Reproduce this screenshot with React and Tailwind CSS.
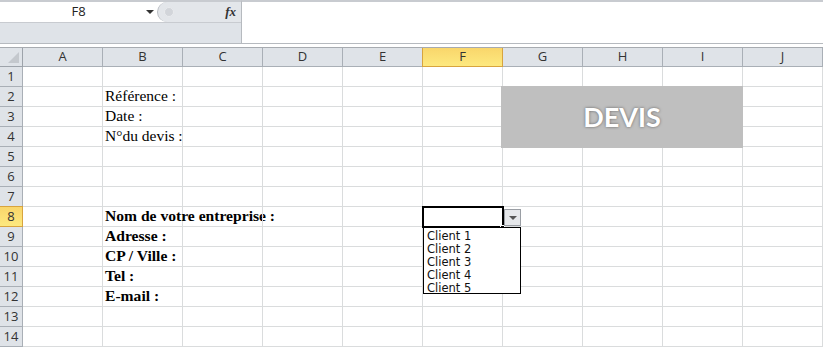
import { useState } from "react";

const cols = ["A", "B", "C", "D", "E", "F", "G", "H", "I", "J"];
const rows = [1, 2, 3, 4, 5, 6, 7, 8, 9, 10, 11, 12, 13, 14];

// contenu de la colonne B (texte qui déborde sur C)
const labels = {
  2: { text: "Référence :", bold: false },
  3: { text: "Date :", bold: false },
  4: { text: "N°du devis :", bold: false },
  8: { text: "Nom de votre entreprise :", bold: true },
  9: { text: "Adresse :", bold: true },
  10: { text: "CP / Ville :", bold: true },
  11: { text: "Tel :", bold: true },
  12: { text: "E-mail :", bold: true },
};

const clients = ["Client 1", "Client 2", "Client 3", "Client 4", "Client 5"];

export default function App() {
  const [active] = useState({ col: "F", row: 8 });

  return (
    <div className="w-[823px] h-[348px] bg-white overflow-hidden" style={{ fontFamily: "'Open Sans', 'Liberation Sans', sans-serif" }}>
      {/* Barre de formule */}
      <div className="h-[48px] flex flex-col bg-[#f3f4f6]">
        <div className="h-[44px] flex border-b border-[#b6babf]">
          <div className="w-[241px] flex flex-col border-t-2 border-[#c8cbd0]">
            <div className="h-[21px] flex bg-white border-b border-[#c8cbd0]">
              <div className="w-[157px] relative flex items-center justify-center text-[13px] text-[#222]">
                F8
                <span className="absolute right-[3px] top-[8px] w-0 h-0 border-l-[4px] border-r-[4px] border-t-[4px] border-l-transparent border-r-transparent border-t-[#333]" />
              </div>
              <div className="flex-1 relative bg-[#e3e6ea] rounded-l-full border-l border-[#b9bdc3] flex items-center">
                <span className="ml-[6px] w-[10px] h-[10px] rounded-full bg-[#d2d5da] border border-[#e9ebee]" />
                <span className="ml-auto mr-[5px] text-[13px] italic font-bold text-[#333]" style={{ fontFamily: "'Liberation Serif', serif" }}>fx</span>
              </div>
            </div>
            <div className="flex-1 bg-[#dfe3e8]" />
          </div>
          <div className="flex-1 bg-white border-l border-t-2 border-[#b6babf] border-t-[#c8cbd0]" />
        </div>
        <div className="flex-1 border-b border-[#a7abb0] bg-white" />
      </div>

      {/* Feuille */}
      <div className="relative">
        <div className="grid grid-cols-[23px_repeat(10,80px)] grid-rows-[19px_repeat(14,20px)]">
          <div className="bg-[#dfe3e8] border-r border-b border-[#9da3aa] relative">
            <span className="absolute right-[3px] bottom-[3px] w-0 h-0" style={{ borderBottom: "11px solid #c4c8cd", borderLeft: "11px solid transparent" }} />
          </div>
          {cols.map((c) =>
            c === active.col ? (
              <div key={c} className="bg-gradient-to-b from-[#f9d66b] to-[#fde97f] border-r border-b border-[#d8a43e] border-l border-l-[#d8a43e] -ml-px flex items-center justify-center text-[13px] text-[#333]">
                {c}
              </div>
            ) : (
              <div key={c} className="bg-[#dfe3e8] border-r border-b border-[#a9afb6] flex items-center justify-center text-[13px] text-[#333]">
                {c}
              </div>
            )
          )}

          {rows.map((r) => (
            <RowCells key={r} r={r} active={active} />
          ))}
        </div>

        {/* Forme DEVIS */}
        <div className="absolute left-[501px] top-[38px] w-[242px] h-[62px] bg-[#bfbfbf] flex items-center justify-center">
          <span className="text-white font-bold text-[27px]" style={{ fontFamily: "Lato, 'Open Sans', sans-serif", textShadow: "0 0 3px rgba(0,0,0,0.5)" }}>
            DEVIS
          </span>
        </div>

        {/* Cellule active + liste déroulante */}
        <div className="absolute left-[422px] top-[158px] w-[82px] h-[22px] border-2 border-black" />
        <div className="absolute left-[500px] top-[177px] w-[5px] h-[5px] bg-black border border-white" />
        <div className="absolute left-[504px] top-[161px] w-[17px] h-[17px] bg-[#e6e8eb] border border-[#9a9ea4] flex items-center justify-center">
          <span className="w-0 h-0 border-l-[4px] border-r-[4px] border-t-[4px] border-l-transparent border-r-transparent border-t-[#555]" />
        </div>
        <div className="absolute left-[423px] top-[179px] w-[98px] h-[67px] bg-white border border-black pt-[2px] pl-[3px]">
          {clients.map((c) => (
            <div key={c} className="h-[13px] leading-[13px] text-[11.5px] text-[#111]" style={{ fontFamily: "'DejaVu Sans', sans-serif" }}>
              {c}
            </div>
          ))}
        </div>
      </div>
    </div>
  );
}

function RowCells({ r, active }) {
  const isActive = r === active.row;
  const label = labels[r];
  return (
    <>
      {isActive ? (
        <div className="bg-gradient-to-b from-[#f9d66b] to-[#fde97f] border-r border-b border-[#d8a43e] border-t border-t-[#d8a43e] -mt-px flex items-center justify-center text-[13px] text-[#333]">
          {r}
        </div>
      ) : (
        <div className="bg-[#dfe3e8] border-r border-b border-[#a9afb6] flex items-center justify-center text-[13px] text-[#333]">
          {r}
        </div>
      )}
      {cols.map((c) => (
        <div key={c} className="border-r border-b border-[#dadcdd] relative">
          {c === "B" && label && (
            <span
              className={`absolute left-[2px] bottom-[1px] whitespace-nowrap leading-[18px] text-black ${label.bold ? "font-bold text-[15.6px]" : "text-[15.5px]"}`}
              style={{ fontFamily: "'Liberation Serif', 'Times New Roman', serif" }}
            >
              {label.text}
            </span>
          )}
        </div>
      ))}
    </>
  );
}
